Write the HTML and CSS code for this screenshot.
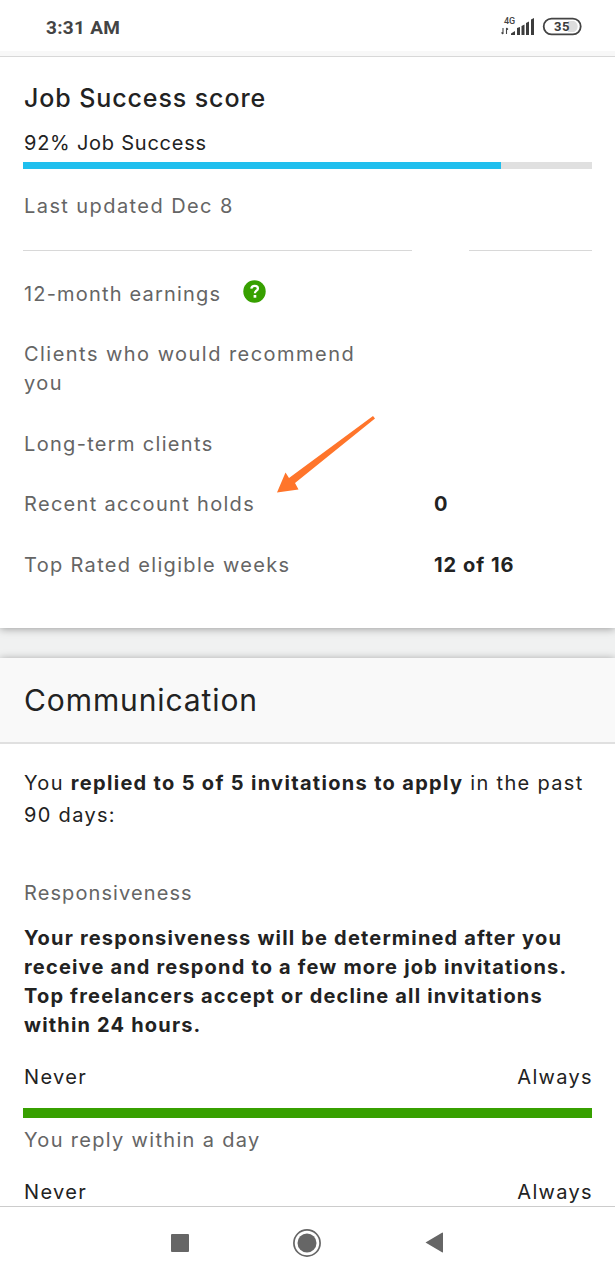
FILE: index.html
```html
<!DOCTYPE html>
<html lang="en">
<head>
    <meta charset="UTF-8">
    <meta name="viewport" content="width=device-width, initial-scale=1.0">
    <title>My Stats</title>
    <link rel="stylesheet" href="styles.css">
</head>
<body>

<div class="screen">
    <header class="status-bar">
        <span class="time">3:31 AM</span>
        <svg class="status-icons" width="84" height="24" viewBox="0 0 84 24">
            <text class="network" x="4" y="9">4G</text>
            <path d="M3 13v6M1.5 17.5L3 19M6.500 19v-6M8 14.500L6.500 13" fill="none" stroke="#444" stroke-width="1.100"/>
            <path d="M11 20v-1.500l4-2.500v4zM17 20v-7l3-1v8zM21.500 20V11l3-1.500V20zM26 20V8l3-1.500V20zM31 20V4.500L34 3v17z" fill="#3c3c3c"/>
            <path d="M68 6h6a6 6 0 0 1 0 11h-6z" fill="#ddd"/>
            <rect x="43.700" y="3.700" width="37" height="15.600" rx="7.800" fill="none" stroke="#444" stroke-width="1.800"/>
            <text class="battery" x="62" y="16.300">35</text>
        </svg>
    </header>

    <main class="content">
        <section class="card">
            <h3 class="score-title">Job Success score</h3>
            <p class="score-value">92% Job Success</p>
            <div class="bar"><div class="bar-fill" style="width:84%"></div></div>
            <p class="updated">Last updated Dec 8</p>
            <div class="divider"><span class="line-long"></span><span class="line-short"></span></div>
            <div class="stats">
                <div class="row">
                    <span class="label">
                        <span class="earnings">12-month earnings</span>
                        <svg class="help" width="23" height="23" viewBox="0 0 23 23">
                            <circle cx="11.500" cy="11.500" r="11.200" fill="#37a000"/>
                            <path d="M8.300 8.700c.2-2 1.500-2.900 3.400-2.900 1.900 0 3.200 1 3.200 2.600 0 2.300-3 2.300-3 4.800" fill="none" stroke="#fff" stroke-width="2.300"/>
                            <rect x="10.600" y="15" width="2.700" height="2.700" fill="#fff"/>
                        </svg>
                    </span>
                </div>
                <div class="row"><span class="label clients">Clients who would recommend<br>you</span></div>
                <div class="row"><span class="label">Long-term clients</span></div>
                <div class="row holds">
                    <span class="label">Recent account holds</span><b>0</b>
                    <svg class="arrow" width="100" height="80" viewBox="275 414 100 80">
                        <path d="M277 492.500L285.500 472.500L289 478L373 416L375 418.500L295 483L298.500 489.500Z" fill="#ff752b"/>
                    </svg>
                </div>
                <div class="row"><span class="label">Top Rated eligible weeks</span><b>12 of 16</b></div>
            </div>
        </section>

        <section class="card communication">
            <h2 class="card-header">Communication</h2>
            <div class="card-body">
                <p class="replied">You <b>replied to 5 of 5 invitations to apply</b> in the past<br>90 days:</p>
                <p class="muted responsiveness">Responsiveness</p>
                <p class="notice">Your responsiveness will be determined after you<br>receive and respond to a few more job invitations.<br>Top freelancers accept or decline all invitations<br>within 24 hours.</p>
                <div class="scale"><span>Never</span><span>Always</span></div>
                <div class="reply-bar"></div>
                <p class="muted reply">You reply within a day</p>
                <div class="scale"><span>Never</span><span>Always</span></div>
            </div>
        </section>
    </main>

    <nav class="nav-bar">
        <svg width="18" height="18" viewBox="0 0 18 18"><rect width="18" height="18" rx="1" fill="#666"/></svg>
        <svg width="28" height="28" viewBox="0 0 28 28">
            <circle cx="14" cy="14" r="13.100" fill="none" stroke="#666" stroke-width="1.700"/>
            <circle cx="14" cy="14" r="9.500" fill="#666"/>
        </svg>
        <svg width="18" height="21" viewBox="0 0 18 21"><path d="M.5 10.500L17 .8q1-.6 1 .5v18.400q0 1.100-1 .5z" fill="#666"/></svg>
    </nav>
</div>

</body>
</html>
```

FILE: styles.css
```css
* {
    box-sizing: border-box;
}
body {
    font-family: Inter, "Liberation Sans", sans-serif;
    font-size: 20px;
    line-height: 29px;
    letter-spacing: 1.32px;
    color: #222;
    background-color: #fff;
    margin: 0;
}
h2, h3, p {
    margin: 0;
}
svg {
    display: block;
}
.screen {
    width: 615px;
    height: 1280px;
    display: flex;
    flex-direction: column;
    overflow: hidden;
}
.status-bar {
    flex: none;
    height: 57px;
    padding: 15px 31px 0 46px;
    display: flex;
    justify-content: space-between;
    background: linear-gradient(#fff 51px, #f8f8f8 51px);
    border-bottom: 1px solid #d8d8d8;
}
.time {
    font-family: Roboto, sans-serif;
    font-size: 19px;
    font-weight: 700;
    line-height: 26px;
    letter-spacing: 0.3px;
    color: #444;
}
.network {
    font: 500 9px Roboto, sans-serif;
    letter-spacing: 0;
    fill: #444;
}
.battery {
    font: 700 13px Roboto, sans-serif;
    letter-spacing: 0.5px;
    text-anchor: middle;
    fill: #3c3c3c;
}
.content {
    flex: 1;
    min-height: 0;
    overflow: hidden;
    background-color: #f0f1f1;
}
.card {
    height: 571px;
    padding: 27px 23px 0 24px;
    background-color: #fff;
    box-shadow: 0 1px 8px rgba(0, 0, 0, 0.35);
}
.score-title {
    font-size: 25px;
    font-weight: 500;
    letter-spacing: 0.9px;
}
.score-value {
    margin-top: 16px;
    letter-spacing: 0.76px;
}
.bar {
    height: 7px;
    margin: 4px 0 0 -1px;
    background-color: #e0e0e0;
}
.bar-fill {
    height: 7px;
    background-color: #1fbfee;
}
.updated {
    margin-top: 23px;
    letter-spacing: 1.42px;
    color: #656565;
}
.divider {
    display: flex;
    justify-content: space-between;
    margin: 29px 0 0 -1px;
}
.line-long, .line-short {
    height: 1px;
    background-color: #d8d8d8;
}
.line-long {
    width: 389px;
}
.line-short {
    width: 123px;
}
.stats {
    display: grid;
    gap: 31.5px;
    margin-top: 28.5px;
}
.row {
    display: grid;
    grid-template-columns: 388px 1fr;
    column-gap: 22px;
}
.label {
    display: flex;
    color: #656565;
}
.clients {
    display: block;
    letter-spacing: 1.46px;
}
.earnings {
    letter-spacing: 1.18px;
}
.help {
    margin-left: 21.5px;
}
.holds {
    position: relative;
}
.arrow {
    position: absolute;
    left: 251px;
    top: -76px;
}
b {
    font-weight: 700;
}
.row b {
    letter-spacing: 1px;
}
.communication {
    height: auto;
    margin-top: 30px;
    padding: 0;
}
.card-header {
    height: 86px;
    padding: 22px 24px;
    font-size: 30px;
    font-weight: 400;
    line-height: 40px;
    letter-spacing: 0.9px;
    background-color: #f9f9f9;
    border-bottom: 2px solid #e0e0e0;
}
.card-body {
    padding: 23px 23px 0 24px;
}
.replied {
    line-height: 32px;
    margin-bottom: 48px;
}
.muted {
    color: #656565;
}
.responsiveness {
    letter-spacing: 1.1px;
}
.notice {
    margin: 16px 0 23px;
    font-weight: 700;
    letter-spacing: 1.18px;
}
.scale {
    display: flex;
    justify-content: space-between;
    margin-right: -1px;
}
.reply-bar {
    height: 10px;
    margin: 16px 0 8px -1px;
    background-color: #37a000;
}
.reply {
    margin-bottom: 23px;
}
.nav-bar {
    flex: none;
    height: 74px;
    display: flex;
    align-items: center;
    gap: 104px;
    padding: 0 0 2px 171px;
    background-color: #fff;
    border-top: 1px solid #ccc;
}
```
